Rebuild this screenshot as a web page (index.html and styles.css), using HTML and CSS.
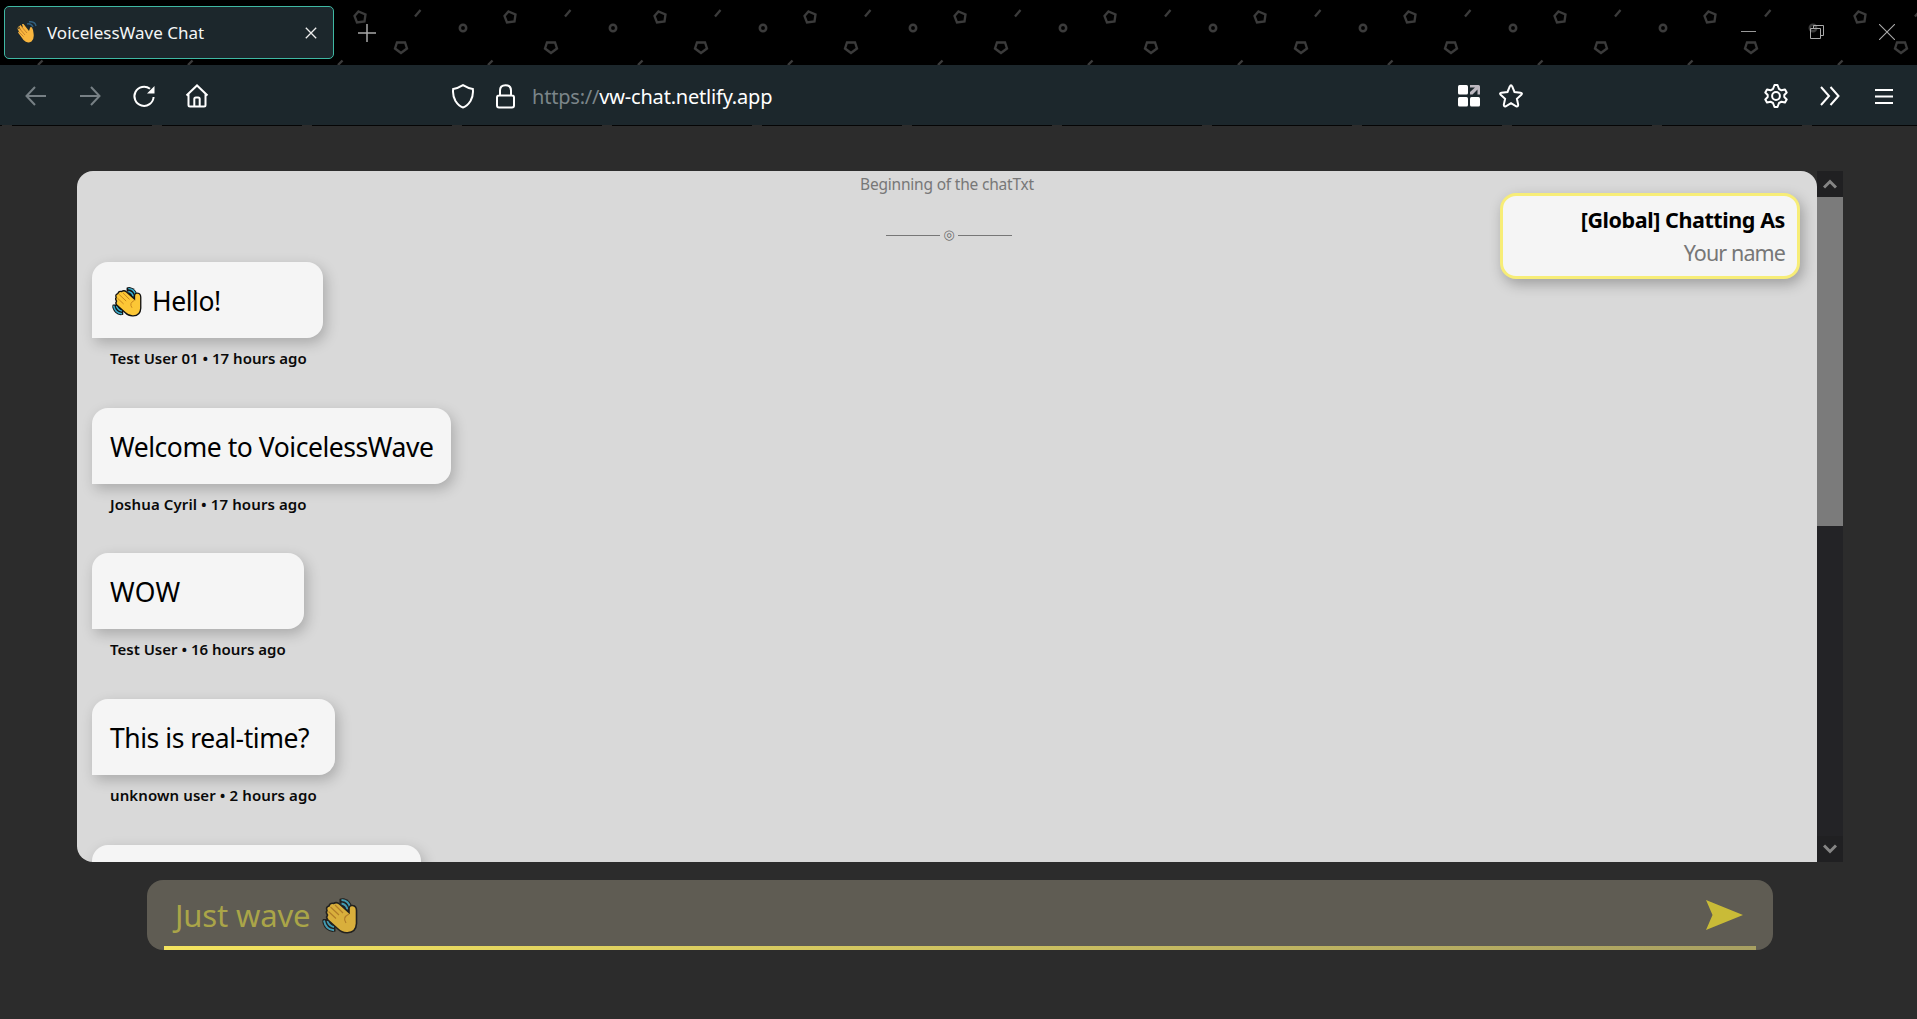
FILE: index.html
```html
<!DOCTYPE html>
<html lang="en">
<head>
<meta charset="utf-8">
<title>VoicelessWave Chat</title>
<link rel="stylesheet" href="styles.css">
</head>
<body>
<svg class="defs" aria-hidden="true">
  <defs>
    <symbol id="wave" viewBox="0 0 36 36">
      <path d="M17.500 5V1.500Q19 .3 22 .8Q29 3 29.800 9V14L24 13Z" fill="#111"/>
      <path d="M4.500 21.500L1 21.500Q0 22.500 .5 25.500Q3 33.500 10.500 34.500L13.500 34V29Z" fill="#111"/>
      <path d="M19.500 2.500Q27 3 28.200 10.500M19.500 6Q24.500 7 25.500 12M2 23Q3.500 32 12 32.800M5.500 23.500Q7 28.500 12 29.500" fill="none" stroke="#3badcd" stroke-width="1.900"/>
      <path d="M5 13Q3.500 9.500 7 8.500Q8 5 11.500 6Q14.500 4 17.500 6.500L27 15V11Q27.500 7.500 30.700 8Q34.500 8.500 34.500 13V26Q34 35 25.500 35.200Q20 35.600 16 31.500L6 22.500Q3.500 20 5.500 17.500Q3.500 15 5 13Z" fill="#fcc736" stroke="#111" stroke-width="1.600"/>
      <path d="M8.500 9.500L17 17.500M6.500 14L14 21M13 7.500L21 15.500M27 16.500Q20 20 24 25.500" fill="none" stroke="#c9871d" stroke-width="1.200"/>
    </symbol>
  </defs>
</svg>
<header class="tabs">
  <svg class="theme" width="1917" height="65">
    <defs>
      <pattern id="shapes" x="30" y="0" width="150" height="65" patternUnits="userSpaceOnUse">
        <g fill="none" stroke="#3b3b3b" stroke-width="2.300">
          <path d="M28.500 11.500L35.500 14.500 34.500 21.500 27 22.500 24.500 16Z"/>
          <path d="M67 42.500H75L77 48.500 71 53 65 48.500Z"/>
          <circle cx="133" cy="28" r="3.200" stroke-width="2.500"/>
          <path d="M85 16.500L90.500 10M8 65L12.500 60.500"/>
        </g>
      </pattern>
    </defs>
    <rect width="1917" height="65" fill="url(#shapes)"/>
  </svg>
  <div class="tab">
    <svg class="favicon" width="20" height="22" viewBox="0 0 20 22">
      <path d="M1 6L2 5 0.800 8.500 2 7.500 4 9 2 5.500 3.500 4 6 7 5 3 6.500 3 12 10 13 7Q13.500 5.500 15 6.500Q16 8 16.500 12Q17.500 18 14.500 20.500Q10 23 6.500 19L1 11.500 2 10.500 0.500 8Z" fill="#f9b63e"/>
      <path d="M2 7L8 14M4 5L10 12M2 11L6.500 15.500" stroke="#b97526" stroke-width=".8"/>
      <path d="M10 3Q14 2 16 6M12 .8Q18 0 19 5" fill="none" stroke="#315f7d" stroke-width="1.400"/>
    </svg>
    <span class="tab-title">VoicelessWave Chat</span>
    <svg class="tab-close" width="12" height="12"><path d="M.8 .8L11.200 11.200M11.200 .8L.8 11.200" stroke="#eee" stroke-width="1.300"/></svg>
  </div>
  <svg class="new-tab" width="18" height="18"><path d="M9 0V18M0 9H18" stroke="#a8a8a8" stroke-width="1.500"/></svg>
  <div class="window-controls">
    <svg width="15" height="16"><path d="M0 7.500H15" stroke="#999"/></svg>
    <svg width="15" height="16"><path d="M.5 4.500H10.500V14.500H.5ZM3.500 4V1.500H13.500V11.500H11" fill="none" stroke="#aaa"/></svg>
    <svg width="16" height="16"><path d="M0 0L16 16M16 0L0 16" stroke="#aaa" stroke-width="1.100"/></svg>
  </div>
</header>
<nav class="toolbar">
  <div class="nav-buttons">
    <svg class="dim" width="22" height="24" viewBox="0 0 22 24"><path d="M21 12H1.500M10 3L1.500 12 10 21"/></svg>
    <svg class="dim" width="22" height="24" viewBox="0 0 22 24"><path d="M1 12H20.500M12 3L20.500 12 12 21"/></svg>
    <svg width="24" height="24" viewBox="0 0 24 24"><path d="M18 4.800A9.600 9.600 0 1 0 21.600 13"/><path d="M22.500 2V9.500H15Z" fill="#fff" stroke="none"/></svg>
    <svg width="24" height="24" viewBox="0 0 24 24"><path d="M1.500 11.500L12 1.500 22.500 11.500M3.500 10V21Q3.500 22.500 5 22.500H19Q20.500 22.500 20.500 21V10M9.300 22V15Q9.300 13.500 10.800 13.500H13.200Q14.700 13.500 14.700 15V22"/></svg>
  </div>
  <div class="address">
    <svg width="22" height="25" viewBox="0 0 22 25"><path d="M11 1.200Q16 4.300 20.800 5Q21.700 11 18.500 17Q15 22.500 11 23.500Q7 22.500 3.500 17Q.3 11 1.200 5Q6 4.300 11 1.200Z"/></svg>
    <svg class="lock" width="19" height="25" viewBox="0 0 19 25"><path d="M3 11.500H16Q18 11.500 18 13.500V21.500Q18 23.500 16 23.500H3Q1 23.500 1 21.500V13.500Q1 11.500 3 11.500ZM4 11V6.500Q4 1.200 9.500 1.200T15 6.500V11"/></svg>
    <span class="url"><span class="scheme">https://</span><span class="host">vw-chat.netlify.app</span></span>
  </div>
  <div class="page-actions">
    <svg width="22" height="22" viewBox="0 0 22 22"><g stroke="none" fill="#fff"><rect width="10" height="9.500" rx="1.500"/><rect y="12" width="10" height="9.500" rx="1.500"/><rect x="12" y="12" width="10" height="9.500" rx="1.500"/><path fill="#bdb8c0" d="M12 0H20.500Q22 0 22 1.500V9.500H19.500V4.500L14.500 9.500H12V7L17 2.500H12Z"/></g></svg>
    <svg width="24" height="24" viewBox="0 0 24 24"><path d="M12 1.200Q12.700 1.200 13.200 2.500L15.500 8 21.500 8.700Q23.800 9.200 22.300 10.800L17.900 14.800 19.200 20.800Q19.200 23 17.200 22.300L12 19.200 6.800 22.300Q4.800 23 4.800 20.800L6.100 14.800 1.700 10.800Q.2 9.200 2.500 8.700L8.500 8 10.800 2.500Q11.300 1.200 12 1.200Z"/></svg>
  </div>
  <div class="menu-buttons">
    <svg width="24" height="26" viewBox="0 0 24 26"><circle cx="12" cy="13" r="3.900"/><path d="M10.500 2H13.500L15 6 17.500 7.300 21 6.500 22.700 9.500 20.300 12V14L22.700 16.500 21 19.500 17.500 18.700 15 20 13.500 24H10.500L9 20 6.500 18.700 3 19.500 1.300 16.500 3.700 14V12L1.300 9.500 3 6.500 6.500 7.300 9 6Z" stroke-linejoin="round"/></svg>
    <svg width="20" height="20" viewBox="0 0 20 20"><path d="M1 1L9 10 1 19M10.500 1L18.500 10 10.500 19"/></svg>
    <svg width="18" height="16" viewBox="0 0 18 16"><path d="M0 2H18M0 8.500H18M0 15H18"/></svg>
  </div>
</nav>
<main class="page">
  <section class="chat">
    <div class="messages">
      <p class="beginning">Beginning of the chatTxt</p>
      <div class="divider"><span>◎</span></div>
      <article class="message"><p class="bubble b1"><svg class="emoji" width="30" height="31"><use href="#wave"/></svg><span>Hello!</span></p><p class="meta m1">Test User 01 • 17 hours ago</p></article>
      <article class="message"><p class="bubble b2">Welcome to VoicelessWave</p><p class="meta m2">Joshua Cyril • 17 hours ago</p></article>
      <article class="message"><p class="bubble b3">WOW</p><p class="meta m3">Test User • 16 hours ago</p></article>
      <article class="message"><p class="bubble b4">This is real-time?</p><p class="meta m4">unknown user • 2 hours ago</p></article>
      <article class="message"><p class="bubble b5"></p></article>
    </div>
    <aside class="identity">
      <strong>[Global] Chatting As</strong>
      <span class="name">Your name</span>
    </aside>
    <div class="scrollbar">
      <div class="arrow"><svg width="14" height="10"><path d="M1 8.500L7 2.500 13 8.500"/></svg></div>
      <div class="thumb"></div>
      <div class="track"></div>
      <div class="arrow"><svg width="14" height="10"><path d="M1 1.500L7 7.500 13 1.500"/></svg></div>
    </div>
  </section>
  <form class="composer">
    <span class="placeholder">Just wave</span>
    <svg class="emoji" width="36" height="37"><use href="#wave"/></svg>
    <svg class="send" width="37" height="30"><path d="M0 0L37 15 0 30 6.500 15Z" fill="#c9bb37"/></svg>
  </form>
</main>
</body>
</html>
```

FILE: styles.css
```css
* { box-sizing: border-box; }
body { margin: 0; width: 1917px; height: 1019px; overflow: hidden; background: #2c2c2c; font-family: "Noto Sans", sans-serif; }
p { margin: 0; }
svg { display: block; flex: none; }
span, strong { white-space: nowrap; }
.defs { position: absolute; width: 0; height: 0; }

.tabs { position: relative; height: 65px; background: #000; display: flex; padding: 6px 10px 0 4px; }
.theme { position: absolute; left: 0; top: 0; }
.tab { position: relative; width: 330px; height: 53px; border: 1px solid #3fb8a3; border-radius: 5px; background: #1c272c; display: flex; align-items: center; padding: 0 16px 0 12px; }
.favicon { margin-top: -1px; }
.tab-title { margin-left: 10px; color: #f4f6f6; font-size: 17px; }
.tab-close { margin-left: auto; }
.new-tab { position: relative; margin: 18px 0 0 24px; }
.window-controls { position: relative; display: flex; margin: 18px 12px 0 auto; gap: 54px; }

.toolbar { height: 61px; background: repeating-linear-gradient(90deg, #2c2c2c 0 10px, #050505 10px 150px) 2px 60px / 100% 1px repeat-x, #1c272c; display: flex; align-items: center; padding: 1px 24px 0 25px; }
.toolbar svg { fill: none; stroke: #fff; stroke-width: 2; }
.toolbar .dim { stroke: #778085; }
.nav-buttons { display: flex; gap: 32px; align-items: center; width: 427px; }
.nav-buttons svg:nth-child(3) { margin-left: -1px; }
.nav-buttons svg:nth-child(4) { margin-left: -3px; }
.address { display: flex; align-items: center; width: 1006px; }
.address .lock { margin-left: 22px; }
.url { margin-left: 17px; font-size: 20px; letter-spacing: -.2px; }
.scheme { color: #7b8589; }
.host { color: #fff; }
.page-actions { display: flex; gap: 19px; align-items: center; }
.menu-buttons { display: flex; align-items: center; margin: -1px 0 0 auto; }
.menu-buttons svg + svg { margin-left: 32px; }
.menu-buttons svg:last-child { margin-left: 35px; }

.page { padding-top: 45px; }
.chat { position: relative; width: 1766px; height: 691px; margin-left: 77px; display: flex; }
.messages { width: 1740px; height: 691px; overflow: hidden; background: #d9d9d9; border-radius: 16px 16px 0 16px; padding: 0 15px; }
.beginning { height: 27px; line-height: 27px; margin-left: 768px; font-size: 15.500px; letter-spacing: -.2px; color: #777; white-space: nowrap; }
.divider { display: flex; align-items: center; width: 126px; height: 20px; margin: 27px 0 17px 794px; color: #6e6e6e; font: 13px/20px "DejaVu Sans", sans-serif; }
.divider::before, .divider::after { content: ""; flex: 1; height: 1px; background: #777; }
.divider span { width: 18px; text-align: center; }
.message { height: 145.700px; }
.bubble { display: flex; align-items: center; height: 76px; padding: 2px 18px 0 18px; border-radius: 16px 16px 16px 0; background: #f5f5f5; box-shadow: 3px 5px 14px rgba(0,0,0,.22); color: #000; font-size: 26.500px; letter-spacing: -.45px; white-space: nowrap; }
.bubble .emoji { margin: 0 10px 0 2px; }
.b1 { width: 231px; }
.b2 { width: 359px; }
.b3 { width: 212px; letter-spacing: .3px; }
.b4 { width: 243px; }
.b5 { width: 329px; }
.meta { padding: 9px 0 0 18px; font-size: 15px; line-height: 22px; font-weight: 600; color: #0a0a0a; white-space: nowrap; }
.m2, .m4 { letter-spacing: .1px; }

.identity { position: absolute; left: 1423px; top: 22px; width: 300px; height: 86px; border: 3px solid #f7ed77; border-radius: 16px; background: #f5f5f5; box-shadow: 3px 5px 14px rgba(0,0,0,.28); display: flex; flex-direction: column; align-items: flex-end; padding: 7px 12px 0 0; }
.identity strong { font-size: 21.500px; line-height: 33px; letter-spacing: -.42px; }
.name { font-size: 21.500px; line-height: 33px; letter-spacing: -.9px; color: #777; }

.scrollbar { width: 26px; background: #232326; display: flex; flex-direction: column; }
.arrow { height: 26px; background: #202022; display: flex; align-items: center; justify-content: center; }
.arrow path { fill: none; stroke: #858585; stroke-width: 3; }
.thumb { height: 329px; background: #7b7b7b; }
.track { flex: 1; }

.composer { position: relative; width: 1626px; height: 70px; margin: 18px 0 0 147px; border-radius: 16px; background: #5f5c53; display: flex; align-items: center; padding: 0 30px 0 28px; overflow: hidden; }
.composer::after { content: ""; position: absolute; left: 17px; right: 17px; bottom: 0; height: 4px; background: linear-gradient(90deg, #f5e55f, #a8a062); }
.placeholder { color: #aaa548; font-size: 31px; letter-spacing: -.15px; margin-top: -1px; }
.composer .emoji { margin-left: 12px; opacity: .78; }
.send { margin-left: auto; }
```
